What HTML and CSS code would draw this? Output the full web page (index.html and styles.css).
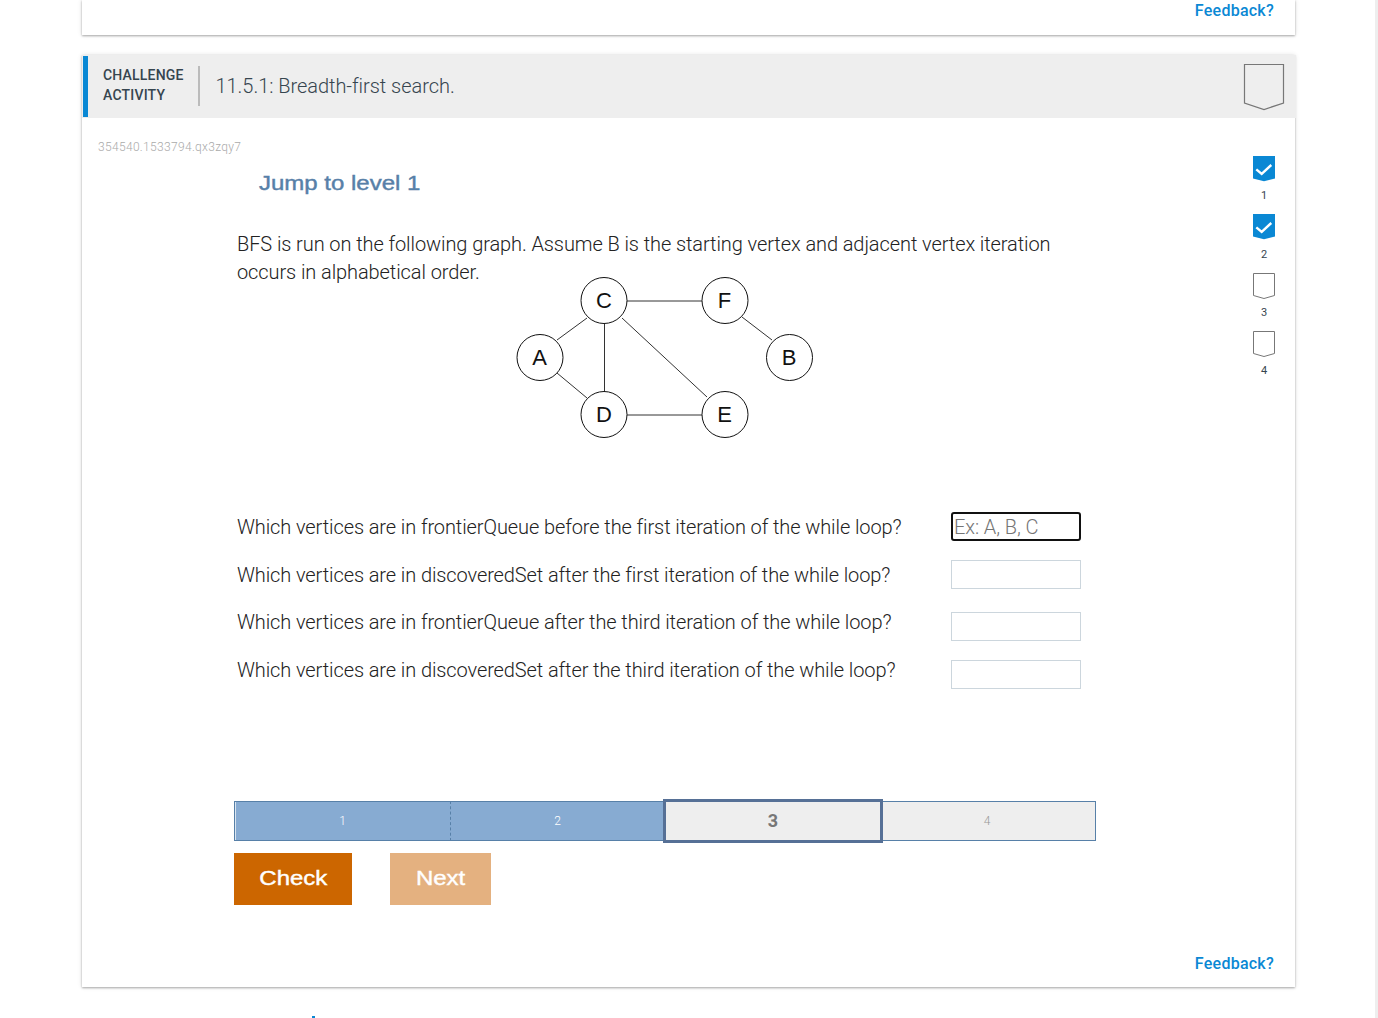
FILE: index.html
```html
<!DOCTYPE html>
<html lang="en">
<head>
<meta charset="utf-8">
<title>Challenge activity 11.5.1</title>
<link rel="stylesheet" href="styles.css">
</head>
<body>
<div class="page">
  <section class="card card-top">
    <a class="feedback" href="#">Feedback?</a>
  </section>

  <section class="card card-main">
    <header class="activity-header">
      <div class="activity-label">CHALLENGE<br>ACTIVITY</div>
      <h1 class="activity-title">11.5.1: Breadth-first search.</h1>
      <svg class="shield" width="42" height="48" viewBox="0 0 42 48"><path d="M1.500 1.500H40.500V40L21 46.500L1.500 40Z" fill="none" stroke="#777" stroke-width="1.200"/></svg>
    </header>

    <div class="activity-body">
      <div class="activity-main">
        <div class="activity-id">354540.1533794.qx3zqy7</div>
        <a class="jump" href="#"><span class="wide">Jump to level 1</span></a>
        <p class="prompt">BFS is run on the following graph. Assume B is the starting vertex and adjacent vertex iteration occurs in alphabetical order.</p>

        <svg class="graph" width="310" height="170" viewBox="0 0 310 170">
          <g class="edges">
            <line x1="94" y1="23" x2="215" y2="23"/>
            <line x1="77" y1="40" x2="47" y2="62"/>
            <line x1="94.500" y1="23" x2="94.500" y2="137"/>
            <line x1="112" y1="40" x2="197" y2="119"/>
            <line x1="47" y1="95" x2="77" y2="120"/>
            <line x1="94" y1="137" x2="215" y2="137"/>
            <line x1="232" y1="39" x2="262" y2="62"/>
          </g>
          <g class="nodes">
            <circle cx="94" cy="22.500" r="23"/><text x="94" y="30">C</text>
            <circle cx="215" cy="22.500" r="23"/><text x="214.500" y="30">F</text>
            <circle cx="30" cy="79.500" r="23"/><text x="29.500" y="87">A</text>
            <circle cx="279.500" cy="79.500" r="23"/><text x="279" y="87">B</text>
            <circle cx="94" cy="136.500" r="23"/><text x="94" y="144">D</text>
            <circle cx="215" cy="136.500" r="23"/><text x="214.500" y="144">E</text>
          </g>
        </svg>

        <div class="questions">
          <div class="question">
            <label class="question-text">Which vertices are in frontierQueue before the first iteration of the while loop?</label>
            <input class="answer answer-focus" type="text" placeholder="Ex: A, B, C">
          </div>
          <div class="question question-tight">
            <label class="question-text">Which vertices are in discoveredSet after the first iteration of the while loop?</label>
            <input class="answer" type="text">
          </div>
          <div class="question question-offset">
            <label class="question-text">Which vertices are in frontierQueue after the third iteration of the while loop?</label>
            <input class="answer" type="text">
          </div>
          <div class="question question-offset">
            <label class="question-text">Which vertices are in discoveredSet after the third iteration of the while loop?</label>
            <input class="answer" type="text">
          </div>
        </div>

        <div class="levels-bar">
          <div class="seg seg-done seg-first">1</div>
          <div class="seg seg-done seg-second">2</div>
          <div class="seg seg-current">3</div>
          <div class="seg seg-todo">4</div>
        </div>

        <div class="actions">
          <button class="btn btn-check" type="button"><span class="wide">Check</span></button>
          <button class="btn btn-next" type="button"><span class="wide">Next</span></button>
        </div>
      </div>

      <aside class="rail">
        <div class="rail-item">
          <svg class="chev" width="24" height="26" viewBox="0 0 24 26"><path d="M1 0H23V22.500L12 25.300L1 22.500Z" fill="#0a88d4"/><path d="M4.300 13.300L9.700 18L19.300 9" fill="none" stroke="#fff" stroke-width="2.400"/></svg>
          <span class="rail-num">1</span>
        </div>
        <div class="rail-item">
          <svg class="chev" width="24" height="26" viewBox="0 0 24 26"><path d="M1 0H23V22.500L12 25.300L1 22.500Z" fill="#0a88d4"/><path d="M4.300 13.300L9.700 18L19.300 9" fill="none" stroke="#fff" stroke-width="2.400"/></svg>
          <span class="rail-num rail-num-low">2</span>
        </div>
        <div class="rail-item">
          <svg class="chev" width="24" height="26" viewBox="0 0 24 26"><path d="M1.500 0.500H22.500V22.500L12 25.500L1.500 22.500Z" fill="#fff" stroke="#777"/></svg>
          <span class="rail-num">3</span>
        </div>
        <div class="rail-item">
          <svg class="chev" width="24" height="26" viewBox="0 0 24 26"><path d="M1.500 0.500H22.500V22.500L12 25.500L1.500 22.500Z" fill="#fff" stroke="#777"/></svg>
          <span class="rail-num">4</span>
        </div>
      </aside>
    </div>

    <a class="feedback feedback-bottom" href="#">Feedback?</a>
  </section>
</div>
<span class="stray-mark"></span>
<div class="window-edge"></div>
</body>
</html>
```

FILE: styles.css
```css
* { box-sizing: border-box; }

html, body {
  margin: 0;
  height: 1018px;
  overflow: hidden;
  background: #fff;
  font-family: Roboto, "Liberation Sans", sans-serif;
  color: #222;
}

body { position: relative; }

.page {
  width: 1213px;
  margin-left: 82px;
  display: flex;
  flex-direction: column;
  gap: 20px;
}

.card {
  background: #fff;
  box-shadow: 0 1px 2px rgba(0, 0, 0, .3), 0 0 5px rgba(0, 0, 0, .12);
}

.card-top {
  height: 35px;
  display: flex;
  justify-content: flex-end;
  align-items: flex-start;
  padding: 1px 21px 0 0;
}

.feedback {
  font-size: 16px;
  font-weight: 500;
  line-height: 19px;
  letter-spacing: .25px;
  color: #0a88d4;
  text-decoration: none;
}

.card-main {
  height: 932px;
  display: flex;
  flex-direction: column;
}

.feedback-bottom {
  align-self: flex-end;
  margin: 0 21px 14px 0;
}

.activity-header {
  height: 63px;
  margin-right: -1px;
  background: #eee;
  display: flex;
  align-items: flex-start;
  padding-left: 1px;
}

.activity-header::before {
  content: "";
  width: 5px;
  height: 61px;
  margin-top: 1px;
  background: #0a88d4;
  flex: none;
}

.activity-label {
  margin: 10px 0 0 15px;
  width: 95px;
  font-size: 14px;
  font-weight: 500;
  line-height: 20px;
  color: #36454f;
  letter-spacing: .2px;
}

.activity-title {
  margin: 11px 0 0;
  height: 40px;
  border-left: 2px solid #bbb;
  padding-left: 15.500px;
  flex: 1;
  font-size: 20px;
  font-weight: 300;
  line-height: 40px;
  letter-spacing: -.04px;
  color: #36454f;
}

.shield { margin: 8px 11px 0 0; }

.activity-body {
  flex: 1;
  display: flex;
}

.activity-main {
  flex: 1;
  min-width: 0;
  padding-left: 16px;
}

.activity-id {
  margin-top: 22px;
  font-size: 12px;
  font-weight: 300;
  line-height: 14px;
  letter-spacing: .32px;
  color: #aaa;
}

.wide {
  display: inline-block;
  font-family: "Liberation Sans", Arial, sans-serif;
  font-size: 20px;
  font-weight: 400;
  -webkit-text-stroke: .4px currentColor;
  transform: scaleX(1.2);
}

.jump {
  display: block;
  margin: 17px 0 0 160.500px;
  line-height: 24px;
  color: #5780a8;
  text-decoration: none;
}

.jump .wide { transform-origin: left center; }

.prompt {
  width: 830px;
  margin: 33px 0 0 139px;
  font-size: 20px;
  font-weight: 300;
  line-height: 28px;
  letter-spacing: -.09px;
  color: #222;
}

.graph {
  display: block;
  margin: -8px 0 0 412px;
  overflow: visible;
}

.edges line {
  stroke: #333;
  stroke-width: 1;
}

.nodes circle {
  fill: #fff;
  stroke: #111;
  stroke-width: 1;
}

.nodes text {
  font-family: "Liberation Sans", Arial, sans-serif;
  font-size: 22px;
  text-anchor: middle;
  fill: #111;
}

.questions {
  margin: 64px 0 0 139px;
}

.question {
  width: 844px;
  height: 48px;
  display: flex;
  justify-content: space-between;
  align-items: flex-start;
}

.question-tight { height: 47px; }

.question-text {
  padding-top: 1px;
  font-size: 20px;
  font-weight: 300;
  line-height: 29px;
  letter-spacing: -.1px;
  color: #222;
}

.answer {
  width: 130px;
  height: 29px;
  padding: 0 1px;
  border: 1px solid #ccd6dd;
  border-radius: 0;
  outline: none;
  background: #fff;
  font-family: Roboto, sans-serif;
  font-size: 20px;
  font-weight: 300;
  letter-spacing: -.09px;
}

.question-offset .answer { margin-top: 5px; }

.answer-focus {
  border: 2px solid #111;
  border-radius: 3px;
}

.answer::placeholder {
  color: #757575;
  opacity: 1;
}

.levels-bar {
  width: 862px;
  height: 40px;
  margin: 98px 0 0 136px;
  display: flex;
}

.seg {
  height: 40px;
  border: 1px solid #5780a8;
  border-width: 1px 0;
  display: flex;
  align-items: center;
  justify-content: center;
  font-size: 12px;
  font-weight: 300;
}

.seg-done {
  background: #87abd2;
  color: #fff;
}

.seg-first {
  width: 217px;
  border-left: 1px solid #5780a8;
  box-shadow: inset 1px 0 0 #dbe6f1;
  border-right: 1px dashed #5780a8;
}

.seg-second { width: 213px; }

.seg-current {
  width: 220px;
  height: 44px;
  margin: -2px 0 0 -1px;
  padding-bottom: 2px;
  border: 3px solid #567096;
  background: #eee;
  color: #777;
  font-size: 18px;
  font-weight: 700;
}

.seg-todo {
  width: 213px;
  padding-right: 4px;
  background: #eee;
  color: #999;
  border-right: 1px solid #5780a8;
}

.actions {
  display: flex;
  gap: 38px;
  margin: 12px 0 0 136px;
}

.btn {
  height: 52px;
  border: 0;
  border-radius: 0;
  padding: 0 0 2px;
  color: #fff;
}

.btn-check {
  width: 118px;
  background: #cc6600;
}

.btn-next {
  width: 101px;
  background: #e4b180;
}

.rail {
  width: 64px;
  padding: 38px 0 0 21px;
  display: flex;
  flex-direction: column;
  gap: 10.800px;
  flex: none;
}

.rail-item {
  width: 24px;
  height: 47.500px;
  display: flex;
  flex-direction: column;
  align-items: center;
  gap: 7px;
}

.chev {
  display: block;
  flex: none;
}

.rail-num {
  font-size: 11px;
  font-weight: 400;
  line-height: 13px;
  color: #36454f;
}

.rail-num-low { margin-top: 1px; }

.stray-mark {
  position: absolute;
  left: 312px;
  top: 1016px;
  width: 3px;
  height: 2px;
  background: #0a88d4;
}

.window-edge {
  position: absolute;
  top: 0;
  right: 0;
  width: 3px;
  height: 1018px;
  background: #eee;
}
```
